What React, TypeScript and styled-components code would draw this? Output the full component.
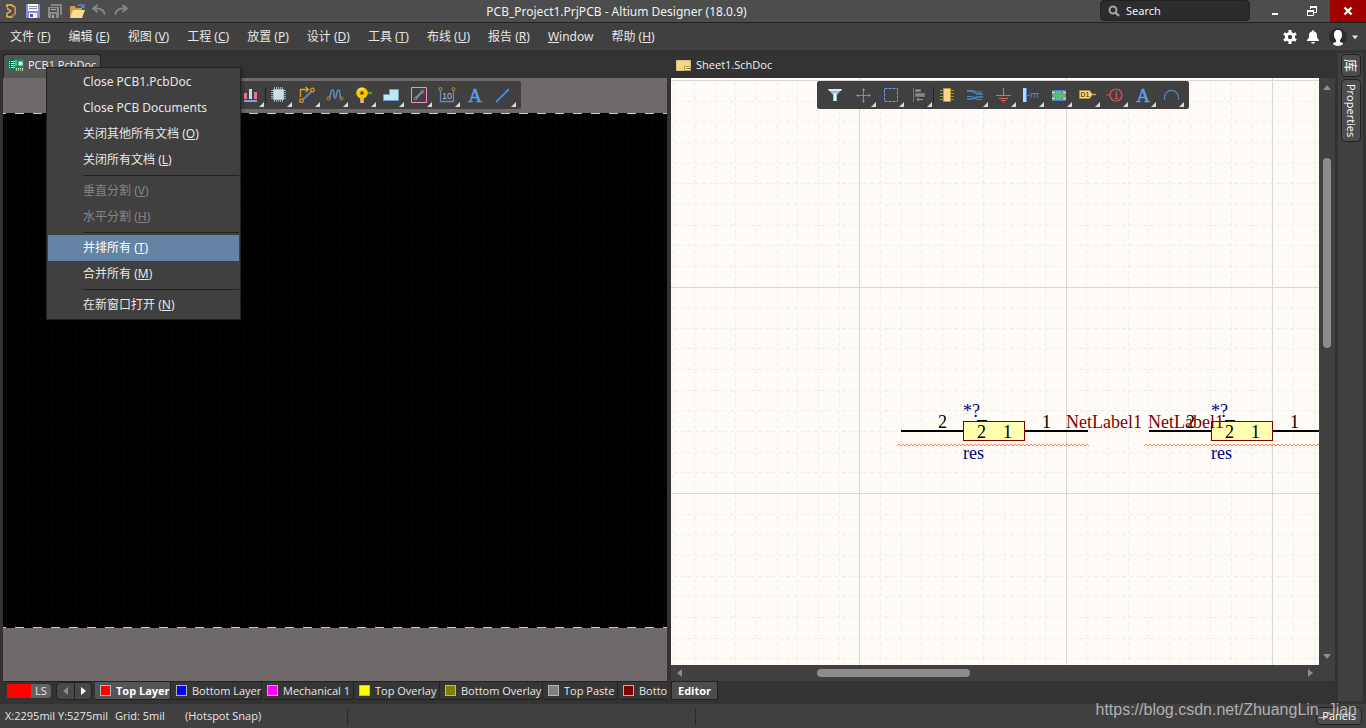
import React from "react";
import styled, { createGlobalStyle } from "styled-components";

const SMALL_FONT = `"Open Sans", "Noto Sans CJK SC", sans-serif`;

const Global = createGlobalStyle`
  * { box-sizing: border-box; }
  html, body { margin: 0; }
  body {
    background: #333333;
    font-family: "Noto Sans", "Noto Sans CJK SC", sans-serif;
    font-size: 12px;
    color: #e6e6e6;
  }
  button, input { font: inherit; color: inherit; margin: 0; }
  button { background: none; border: 0; padding: 0; white-space: nowrap; }
  svg { display: block; }
`;

const Shell = styled.div`
  display: flex;
  flex-direction: column;
  min-height: 100vh;
`;

/* ---------- title bar ---------- */

const TitleBar = styled.header`
  display: flex;
  align-items: flex-start;
  height: 23px;
  background: #4d4d4d;
  border-bottom: 1px solid #222222;
`;

const QuickTools = styled.div`
  display: flex;
  align-items: center;
  gap: 6px;
  padding: 3px 0 0 3px;
`;

const Title = styled.h1`
  flex: 1;
  margin: 0;
  padding-left: 4px;
  text-align: center;
  font-size: 12px;
  font-weight: 400;
  line-height: 24px;
  color: #f0f0f0;
`;

const SearchBox = styled.label`
  display: flex;
  align-items: center;
  gap: 6px;
  width: 150px;
  height: 21px;
  padding: 0 7px;
  margin-right: 8px;
  background: #2c2c2c;
  border: 1px solid #222222;
  border-radius: 4px;
`;

const SearchInput = styled.input`
  flex: 1;
  min-width: 0;
  padding: 0;
  background: none;
  border: 0;
  outline: 0;
  font-size: 11px;
  &::placeholder { color: #f0f0f0; opacity: 1; }
`;

const WindowButton = styled.button<{ $close?: boolean }>`
  display: flex;
  align-items: center;
  justify-content: center;
  width: 36px;
  height: 22px;
  background: ${(p) => (p.$close ? "#a00000" : "transparent")};
`;

/* ---------- main menu ---------- */

const MenuBar = styled.nav`
  display: flex;
  align-items: center;
  gap: 18px;
  height: 27px;
  padding: 0 8px 0 10px;
  background: #404040;
`;

const MenuButton = styled.button`
  line-height: 26px;
`;

const MenuActions = styled.div`
  display: flex;
  align-items: center;
  gap: 9px;
  margin-left: auto;
`;

const IconButton = styled.button`
  display: flex;
`;

const Account = styled.button`
  display: flex;
  align-items: center;
  gap: 5px;
`;

/* ---------- workspace ---------- */

const Workspace = styled.main`
  flex: 1;
  display: flex;
  padding: 0 3px;
  background: #333333;
`;

const Pane = styled.section`
  flex: 1 1 0;
  min-width: 0;
  display: flex;
  flex-direction: column;
  & + & { margin-left: 4px; }
`;

const TabRow = styled.div`
  display: flex;
  align-items: flex-end;
  height: 28px;
`;

const TabHolder = styled.div`
  position: relative;
`;

const DocTab = styled.button<{ $active?: boolean }>`
  display: flex;
  align-items: center;
  gap: 4px;
  height: 24px;
  padding: 0 4px 4px;
  font-family: ${SMALL_FONT};
  font-size: 11px;
  color: #f0f0f0;
  border: 1px solid ${(p) => (p.$active ? "#222222" : "transparent")};
  border-bottom: 0;
  border-radius: 4px 4px 0 0;
  background: ${(p) => (p.$active ? "#555555" : "transparent")};
`;

const ContextMenu = styled.div`
  position: absolute;
  z-index: 5;
  top: 13px;
  left: 43px;
  width: 195px;
  padding: 1px;
  background: #404040;
  border: 1px solid #222222;
  box-shadow: 2px 2px 3px rgba(0, 0, 0, 0.3);
`;

const ContextItem = styled.button<{ $selected?: boolean }>`
  display: block;
  width: 100%;
  height: 26px;
  padding-left: 35px;
  text-align: left;
  line-height: 26px;
  background: ${(p) => (p.$selected ? "#6384a5" : "transparent")};
  color: ${(p) => (p.$selected ? "#ffffff" : "#e6e6e6")};
  &:disabled { color: #858585; }
`;

const ContextRule = styled.hr`
  height: 1px;
  margin: 2px 0 2px 35px;
  border: 0;
  background: #222222;
`;

const ToolBar = styled.div`
  position: absolute;
  z-index: 2;
  top: 3px;
  left: 50%;
  transform: translateX(-50%);
  display: flex;
  padding: 0 4px;
  background: #404040;
  border-radius: 2px;
`;

const ToolButton = styled.button<{ $flyout?: boolean; $divided?: boolean }>`
  position: relative;
  display: flex;
  align-items: center;
  justify-content: center;
  width: 28px;
  height: 28px;
  &::after {
    content: "";
    position: absolute;
    right: 1px;
    bottom: 2px;
    border-style: solid;
    border-width: 0 0 5px 5px;
    border-color: transparent transparent #d8d8d8 transparent;
    display: ${(p) => (p.$flyout ? "block" : "none")};
  }
  &::before {
    content: "";
    position: absolute;
    left: 0;
    top: 6px;
    width: 1px;
    height: 16px;
    background: #222222;
    display: ${(p) => (p.$divided ? "block" : "none")};
  }
`;

/* ---------- board view ---------- */

const BoardView = styled.div`
  position: relative;
  flex: 1;
  display: flex;
  flex-direction: column;
  padding: 35px 0 53px;
  background: #6f6a69;
`;

const Board = styled.div`
  flex: 1;
  background-color: #000000;
  background-image:
    repeating-linear-gradient(90deg, #c8c8c8 0 3px, #000000 3px 12px, #c8c8c8 12px 18px),
    repeating-linear-gradient(90deg, #c8c8c8 0 3px, #000000 3px 12px, #c8c8c8 12px 18px),
    radial-gradient(circle at 1px 1px, #060606 1px, transparent 1px);
  background-size: 100% 1px, 100% 1px, 6px 6px;
  background-position: top, bottom, 0 0;
  background-repeat: no-repeat, no-repeat, repeat;
`;

const LayerBar = styled.div`
  display: flex;
  height: 23px;
  overflow: hidden;
  border-top: 1px solid #222222;
  font-family: ${SMALL_FONT};
  font-size: 11px;
`;

const LayerSet = styled.button`
  display: flex;
  align-self: flex-start;
  height: 14px;
  margin: 2px 5px 0 4px;
  line-height: 14px;
  border-radius: 0 4px 4px 0;
  background: #636363;
`;

const CurrentColor = styled.span`
  width: 24px;
  height: 14px;
  background: #ff0000;
`;

const LayerSetName = styled.span`
  width: 20px;
  text-align: center;
`;

const LayerNav = styled.div`
  display: flex;
  align-self: flex-start;
  height: 18px;
  margin-right: 3px;
  border: 1px solid #222222;
  border-radius: 4px;
  background: #484848;
`;

const NavButton = styled.button`
  display: flex;
  align-items: center;
  justify-content: center;
  width: 17px;
  & + & { border-left: 1px solid #222222; }
`;

const LayerTab = styled.button<{ $width: number; $active?: boolean }>`
  display: flex;
  flex: none;
  align-items: center;
  gap: 5px;
  width: ${(p) => p.$width}px;
  height: 18px;
  padding-left: 5px;
  border: 1px solid #222222;
  border-width: 0 1px 1px 0;
  border-radius: 0 0 3px 3px;
  background: ${(p) => (p.$active ? "#555555" : "#363636")};
  font-weight: ${(p) => (p.$active ? 700 : 400)};
  color: ${(p) => (p.$active ? "#ffffff" : "#e6e6e6")};
`;

const Swatch = styled.span<{ $color: string }>`
  flex: none;
  width: 11px;
  height: 11px;
  border: 1px solid #b4b4b4;
  background: ${(p) => p.$color};
`;

/* ---------- schematic view ---------- */

const SheetArea = styled.div`
  position: relative;
  flex: 1;
  display: flex;
  min-height: 0;
`;

const Sheet = styled.div`
  position: relative;
  flex: 1;
  min-width: 0;
  overflow: hidden;
  background: #fffcf7;
  & > svg { position: absolute; inset: 0; }
`;

const ScrollTrack = styled.div<{ $vertical?: boolean }>`
  display: flex;
  flex-direction: ${(p) => (p.$vertical ? "column" : "row")};
  align-items: center;
  justify-content: space-between;
  flex: none;
  width: ${(p) => (p.$vertical ? "16px" : "auto")};
  height: ${(p) => (p.$vertical ? "auto" : "16px")};
  margin-right: ${(p) => (p.$vertical ? "0" : "16px")};
  padding: ${(p) => (p.$vertical ? "5px 0" : "0 5px")};
  background: #404040;
  box-shadow: ${(p) => (p.$vertical ? "none" : "16px 0 0 #404040")};
`;

const ScrollLane = styled.div<{ $vertical?: boolean }>`
  display: flex;
  flex: 1;
  flex-direction: ${(p) => (p.$vertical ? "column" : "row")};
`;

const ScrollGap = styled.span<{ $grow: number }>`
  flex: ${(p) => p.$grow} 1 0;
`;

const Thumb = styled.span<{ $grow: number }>`
  flex: ${(p) => p.$grow} 1 0;
  min-width: 8px;
  min-height: 8px;
  border-radius: 4px;
  background: #8c8c8c;
`;

const EditorRow = styled.div`
  display: flex;
  align-items: flex-start;
  height: 23px;
`;

const EditorTab = styled.button`
  height: 19px;
  padding: 0 6px;
  border: 1px solid #222222;
  background: #4d4d4d;
  font-family: ${SMALL_FONT};
  font-size: 11px;
  font-weight: 700;
  color: #ffffff;
`;

/* ---------- side dock ---------- */

const Dock = styled.aside`
  display: flex;
  flex-direction: column;
  align-items: center;
  gap: 2px;
  width: 25px;
  margin: 3px 0 3px 3px;
  padding-top: 1px;
  background: #404040;
`;

const DockTab = styled.button`
  display: flex;
  align-items: center;
  width: 20px;
  padding: 4px 0;
  justify-content: center;
  writing-mode: vertical-rl;
  text-orientation: sideways;
  font-family: ${SMALL_FONT};
  line-height: 18px;
  border: 1px solid #222222;
  border-radius: 4px;
  background: #4d4d4d;
  color: #ffffff;
`;

const DockGlyph = styled.span`
  font-size: 13px;
`;

const DockWord = styled.span`
  font-size: 11px;
`;

/* ---------- status bar ---------- */

const StatusBar = styled.footer`
  position: relative;
  display: flex;
  height: 24px;
  background: #404040;
  font-family: ${SMALL_FONT};
  font-size: 11px;
  line-height: 24px;
`;

const StatusCell = styled.div`
  display: flex;
  width: 348px;
  padding-left: 5px;
  background: linear-gradient(#2b2b2b, #2b2b2b) right 4px / 1px 17px no-repeat;
`;

const Coordinates = styled.span`
  width: 110px;
`;

const GridSize = styled.span`
  width: 70px;
`;

const PanelsButton = styled.button`
  align-self: center;
  height: 18px;
  margin: 0 4px 0 auto;
  padding: 0 5px;
  line-height: 16px;
  border: 1px solid #222222;
  border-radius: 4px;
  background: #4d4d4d;
  color: #ffffff;
`;

const Watermark = styled.span`
  position: absolute;
  right: 9px;
  bottom: 8px;
  font-family: "Liberation Sans", Arial, sans-serif;
  font-size: 16px;
  line-height: 20px;
  color: rgba(215, 215, 215, 0.75);
`;

/* ---------- icons ---------- */

type IconProps = { children: React.ReactNode; size?: number };

const Icon = ({ children, size = 20 }: IconProps) => (
  <svg width={size} height={size} viewBox={`0 0 ${size} ${size}`} fill="none" aria-hidden="true">
    {children}
  </svg>
);

const LogoIcon = () => (
  <Icon size={16}>
    <path d="M3 1h6l4 3v7l-4 4H5l-2-1v-2l2 1h3l3-3V5L8 3H5v2L3 4z" fill="#c9a45c" />
    <path d="M4 5.500l3.500 2v1L4 10.500v3" stroke="#c9a45c" strokeWidth="1.800" />
    <path d="M11.500 4v7L9 13.500" stroke="#94733a" strokeWidth="1.200" />
  </Icon>
);
const SaveIcon = () => (
  <Icon size={16}>
    <path d="M1 1h14v14H1z" fill="#8b8bdb" />
    <path d="M3 1h10v7H3zM4 10h8v5H4z" fill="#f4f4fb" />
    <path d="M4 3.500h8M4 5.500h8" stroke="#8888a0" />
    <path d="M5 11h3v3H5z" fill="#5555a0" />
  </Icon>
);
const SaveAllIcon = () => (
  <Icon size={16}>
    <path d="M4 1h11v11h-2V3H4z" fill="#858585" />
    <path d="M1 4h11v11H1z" fill="#8c8c8c" />
    <path d="M3 5h7v4H3zM4 11h5v4H4z" fill="#555555" />
    <path d="M4 6.500h5" stroke="#aaaaaa" />
    <path d="M5 12h2v3H5z" fill="#aaaaaa" />
  </Icon>
);
const OpenIcon = () => (
  <Icon size={16}>
    <path d="M1 14V3h5l1 2h6v3" fill="#c99e4b" />
    <path d="M1 15l3-8h12l-3 8z" fill="#f7dc94" />
    <path d="M9 3q3-3 5 1M12 4h3V1" stroke="#5b91cc" strokeWidth="1.300" />
  </Icon>
);
const UndoIcon = ({ flip }: { flip?: boolean }) => (
  <Icon size={16}>
    <path
      d={flip ? "M9.500 2L14 5.500 9.500 9M13.500 5.500H9Q3.500 6 2 11.500" : "M6.500 2L2 5.500 6.500 9M2.500 5.500H7q5.500 .5 7 6"}
      stroke="#858585"
      strokeWidth="2"
    />
  </Icon>
);

const PcbDocIcon = () => (
  <Icon size={16}>
    <path d="M0 2h10v10H0z" fill="#087b56" />
    <path d="M1 4.500h1M1 6.500h1M1 8.500h1M1 10.500h1M3 4.500h5M3 6.500h4M3 8.500h4M3 10.500h4" stroke="#b8eccf" />
    <path d="M7 2h9v12H7z" fill="#0a8f62" />
    <path d="M10.500 4.500h4v4h-4z" fill="#dff5e6" />
    <path d="M8 3v6" stroke="#8be0b5" />
    <path d="M8 11.500h1M10 11.500h1M12 11.500h1M14 11.500h1M8 13h1M10 13h1M12 13h1M14 13h1" stroke="#f5f2ba" />
  </Icon>
);
const SchDocIcon = () => (
  <Icon size={16}>
    <path d="M0.500 3.500h14v10h-14z" fill="#f3d883" stroke="#dcc38a" />
    <path d="M8.500 9.500h6v4h-6z" fill="#fff0b5" stroke="#b59a56" />
    <path d="M10 11.500h4" stroke="#8c7130" />
  </Icon>
);

const FilterIcon = () => (
  <Icon>
    <path d="M3 4h14l-5 6v6H8v-6z" fill="#8fc3d6" />
    <path d="M3 4h14l-1 2H4z" fill="#d5eef5" />
    <path d="M10 8v8" stroke="#eaf9fc" strokeWidth="2" />
  </Icon>
);
const CrossIcon = () => (
  <Icon>
    <path d="M10.500 4v13M4 10.500h13" stroke="#6790dd" />
    <path d="M9.500 5.500l1-2 1 2M9.500 15.500l1 2 1-2M5.500 9.500l-2 1 2 1M15.500 9.500l2 1-2 1" stroke="#6790dd" />
  </Icon>
);
const SelectIcon = () => (
  <Icon>
    <path d="M3.500 3.500h13v13h-13z" stroke="#7396f0" strokeDasharray="3 1" />
  </Icon>
);
const AlignIcon = () => (
  <Icon>
    <path d="M4.500 3v14" stroke="#777777" />
    <path d="M6 4h6v3H6zM6 8h10v4H6z" fill="#777777" />
    <path d="M7 5.500h4M7 10h7M8 14.500h6M8 14.500l2-2M8 14.500l2 2" stroke="#999999" />
  </Icon>
);
const BarsIcon = () => (
  <Icon>
    <path d="M3 8h3v6H3zM13 7h3v7h-3z" fill="#ee7680" />
    <path d="M8 4h3v10H8z" fill="#aee3f5" />
    <path d="M3 16h13" stroke="#7b9df2" strokeWidth="2" />
  </Icon>
);
const ChipIcon = () => (
  <Icon>
    <path
      d="M5.500 2v15M7.500 2v15M9.500 2v15M11.500 2v15M13.500 2v15M2 5.500h15M2 7.500h15M2 9.500h15M2 11.500h15M2 13.500h15"
      stroke="#8fb2c4"
    />
    <path d="M4.500 4.500h10v10h-10z" fill="#d5dade" stroke="#aebfc9" />
  </Icon>
);
const RouteIcon = () => (
  <Icon>
    <path d="M3.500 12V4.500h7M8.500 2l3 2.500-3 2.500" stroke="#e0a51c" strokeWidth="1.300" />
    <path d="M6 14.500L15 6" stroke="#5c80b5" strokeWidth="2.400" />
    <circle cx="4.500" cy="15.500" r="1.800" stroke="#d08c1c" strokeWidth="1.400" />
    <circle cx="15.500" cy="5" r="1.800" stroke="#d08c1c" strokeWidth="1.400" />
  </Icon>
);
const TuneIcon = () => (
  <Icon>
    <path d="M4 13c2 0 1-8 3.500-8S8 13 10 13s1-8 3.500-8S14 13 16 13" stroke="#5c86c4" strokeWidth="1.600" />
    <circle cx="3.500" cy="13.500" r="1.500" stroke="#d08c1c" />
    <circle cx="16.500" cy="13.500" r="1.500" stroke="#d08c1c" />
  </Icon>
);
const ViaIcon = () => (
  <Icon>
    <path d="M9 11v7" stroke="#efb67a" strokeWidth="3.500" />
    <path d="M12 8h7" stroke="#4c9b35" strokeWidth="2.500" />
    <circle cx="9" cy="8" r="3.800" stroke="#f8c900" strokeWidth="4" />
    <circle cx="9" cy="8" r="1.600" fill="#404040" stroke="#a87800" />
    <path d="M5 5q3-3 6-1" stroke="#ffee88" />
  </Icon>
);
const PolygonIcon = () => (
  <Icon>
    <path d="M2.500 9.500h6v-5h9v11h-15z" fill="#c5e6ef" stroke="#67a3c7" />
  </Icon>
);
const RoomIcon = () => (
  <Icon>
    <path d="M2.500 2.500h15v15h-15z" stroke="#f08ed0" />
    <path d="M7 13l6-6" stroke="#6c91c5" strokeWidth="2.200" />
    <circle cx="6.500" cy="13.500" r="1.300" stroke="#d0901c" />
    <circle cx="13.500" cy="6.500" r="1.300" stroke="#d0901c" />
  </Icon>
);
const DimensionIcon = () => (
  <Icon>
    <path d="M3.500 6v10.500h13V6" stroke="#6688bb" strokeWidth="1.300" />
    <circle cx="3.500" cy="4" r="1.500" stroke="#d08c1c" />
    <circle cx="16.500" cy="4" r="1.500" stroke="#d08c1c" />
    <text x="10" y="14" textAnchor="middle" fontFamily="Liberation Sans" fontSize="9" fill="#b4c0ca">
      10
    </text>
  </Icon>
);
const LetterIcon = () => (
  <Icon>
    <text x="10" y="17" textAnchor="middle" fontFamily="Liberation Serif" fontSize="19" fill="#5c9de8" stroke="#5c9de8" strokeWidth="0.500">
      A
    </text>
  </Icon>
);
const LineIcon = () => (
  <Icon>
    <path d="M3 17L16 4" stroke="#4a8ad6" strokeWidth="1.800" />
  </Icon>
);
const PartIcon = () => (
  <Icon>
    <path d="M3 5.500h14M3 8.500h14M3 11.500h14M3 14.500h14" stroke="#ad8a36" />
    <path d="M6.500 3.500h7v13h-7z" fill="#fbd78d" stroke="#c4942f" />
  </Icon>
);
const WireIcon = () => (
  <Icon>
    <path d="M2 6h5l5 3h6M2 14h5l5-2h6" stroke="#4486c9" strokeWidth="1.400" />
    <path d="M2 5.500h6l4 1.500h5M2 11.500h5l5 3h5" stroke="#4486c9" />
  </Icon>
);
const GroundIcon = () => (
  <Icon>
    <path d="M10.500 3v7M3 10.500h15M6 13.500h9M8 15.500h5M10 17.500h1" stroke="#f0605e" strokeWidth="1.200" />
  </Icon>
);
const HarnessIcon = () => (
  <Icon>
    <path d="M2 3h3v14H2z" fill="#b7d9ff" />
    <path d="M5.500 3v14" stroke="#4d8ce6" />
    <path d="M5 10.500h4M10 13l1-5M13 13l1-5M16 13l1-5M9 8.500h9" stroke="#5177d6" />
  </Icon>
);
const SheetSymbolIcon = () => (
  <Icon>
    <path d="M3.500 5.500h13v10h-13z" fill="#62ba78" stroke="#4c82e0" />
    <path d="M3 6h4v3H3zM13 6h4v3h-4zM3 12h4v3H3zM13 12h4v3h-4z" fill="#4c82e0" />
    <path d="M3 7.500h3M14 7.500h3M3 13.500h3M14 13.500h3" stroke="#f8e884" strokeWidth="1.500" />
  </Icon>
);
const PortIcon = () => (
  <Icon>
    <path d="M2.500 5.500h10l3 4-3 4h-10z" fill="#f6dc8a" stroke="#b78e35" />
    <path d="M15 9.500h4" stroke="#c89d3f" strokeWidth="1.500" />
    <text x="8" y="12" textAnchor="middle" fontFamily="Liberation Sans" fontSize="7" fontWeight="700" fill="#6d5218">
      D1
    </text>
  </Icon>
);
const DirectiveIcon = () => (
  <Icon>
    <circle cx="11" cy="10" r="6" stroke="#e05256" strokeWidth="1.200" />
    <path d="M1 10h4M10 9h1.500v4.500M10 13.500h3M11.500 6v1.500" stroke="#e05256" strokeWidth="1.200" />
  </Icon>
);
const ArcIcon = () => (
  <Icon>
    <path d="M4 15a7 7 0 1 1 13 0" stroke="#4f82c6" strokeWidth="1.200" />
  </Icon>
);

const SearchIcon = () => (
  <Icon size={12}>
    <circle cx="5" cy="5" r="3.500" stroke="#a6a6a6" strokeWidth="2" />
    <path d="M7.500 7.500L11 11" stroke="#a6a6a6" strokeWidth="2.400" />
  </Icon>
);
const MinimizeIcon = () => (
  <Icon size={10}>
    <path d="M1 8h6" stroke="#ffffff" strokeWidth="2" />
  </Icon>
);
const RestoreIcon = () => (
  <Icon size={10}>
    <path d="M3.500 3V1.500h6v5H7" stroke="#ffffff" />
    <path d="M3 1h7" stroke="#ffffff" strokeWidth="2" />
    <path d="M0.500 4.500h6v5h-6z" stroke="#ffffff" />
    <path d="M0 5h7" stroke="#ffffff" strokeWidth="2" />
  </Icon>
);
const CloseIcon = () => (
  <Icon size={10}>
    <path d="M1.500 1.500l7 7M8.500 1.500l-7 7" stroke="#ffffff" strokeWidth="2.400" />
  </Icon>
);
const GearIcon = () => (
  <Icon size={14}>
    <circle cx="7" cy="7" r="3.500" stroke="#ffffff" strokeWidth="3" />
    <path d="M7 0v3M7 11v3M1 3.500l2.500 1.500M10.500 9l2.500 1.500M1 10.500L3.500 9M10.500 5L13 3.500" stroke="#ffffff" strokeWidth="3" />
    <circle cx="7" cy="7" r="2" fill="#404040" />
  </Icon>
);
const BellIcon = () => (
  <Icon size={14}>
    <path d="M7 0q1 0 1 1.500c3 .5 3 3 3 5q0 2 2 3.500v1H1v-1q2-1.500 2-3.500c0-2 0-4.500 3-5Q6 0 7 0z" fill="#ffffff" />
    <path d="M5 12h4l-1 1.500H6z" fill="#ffffff" />
  </Icon>
);
const UserIcon = () => (
  <Icon size={18}>
    <circle cx="9" cy="9" r="9" fill="#2b2b2b" />
    <path d="M9 2c3 0 4 2 4 5 0 2-1 4-2 5v2l3 1v1q-2 2-5 2t-5-2v-1l3-1v-2c-1-1-2-3-2-5 0-3 1-5 4-5z" fill="#ffffff" />
  </Icon>
);

type Dir = "up" | "down" | "left" | "right";
const TRIANGLES: Record<Dir, string> = {
  up: "M0 7l4-5 4 5z",
  down: "M0 2h8L4 7z",
  left: "M6 0v8L1 4z",
  right: "M2 0v8l5-4z",
};
const Arrow = ({ dir, color = "#8c8c8c", size = 8 }: { dir: Dir; color?: string; size?: number }) => (
  <svg width={size} height={size} viewBox="0 0 8 8" aria-hidden="true">
    <path d={TRIANGLES[dir]} fill={color} />
  </svg>
);

/* ---------- data ---------- */

type Label = { text: string; hotkey?: string };

const MENUS: Label[] = [
  { text: "文件", hotkey: "F" },
  { text: "编辑", hotkey: "E" },
  { text: "视图", hotkey: "V" },
  { text: "工程", hotkey: "C" },
  { text: "放置", hotkey: "P" },
  { text: "设计", hotkey: "D" },
  { text: "工具", hotkey: "T" },
  { text: "布线", hotkey: "U" },
  { text: "报告", hotkey: "R" },
  { text: "Window" },
  { text: "帮助", hotkey: "H" },
];

type Entry = Label & { disabled?: boolean; selected?: boolean };

const CONTEXT_GROUPS: Entry[][] = [
  [
    { text: "Close PCB1.PcbDoc" },
    { text: "Close PCB Documents" },
    { text: "关闭其他所有文档", hotkey: "O" },
    { text: "关闭所有文档", hotkey: "L" },
  ],
  [
    { text: "垂直分割", hotkey: "V", disabled: true },
    { text: "水平分割", hotkey: "H", disabled: true },
  ],
  [
    { text: "并排所有", hotkey: "T", selected: true },
    { text: "合并所有", hotkey: "M" },
  ],
  [{ text: "在新窗口打开", hotkey: "N" }],
];

type Tool = { name: string; icon: React.ReactNode; flyout?: boolean; divided?: boolean };

const PCB_TOOLS: Tool[] = [
  { name: "Filter", icon: <FilterIcon /> },
  { name: "Move", icon: <CrossIcon />, flyout: true },
  { name: "Select", icon: <SelectIcon />, flyout: true },
  { name: "Align", icon: <BarsIcon />, flyout: true },
  { name: "Component", icon: <ChipIcon />, flyout: true, divided: true },
  { name: "Route", icon: <RouteIcon />, flyout: true },
  { name: "Tune", icon: <TuneIcon />, flyout: true },
  { name: "Via", icon: <ViaIcon />, flyout: true },
  { name: "Polygon", icon: <PolygonIcon />, flyout: true },
  { name: "Room", icon: <RoomIcon />, flyout: true },
  { name: "Dimension", icon: <DimensionIcon />, flyout: true },
  { name: "String", icon: <LetterIcon /> },
  { name: "Line", icon: <LineIcon />, flyout: true },
];

const SCH_TOOLS: Tool[] = [
  { name: "Filter", icon: <FilterIcon /> },
  { name: "Move", icon: <CrossIcon />, flyout: true },
  { name: "Select", icon: <SelectIcon />, flyout: true },
  { name: "Align", icon: <AlignIcon />, flyout: true },
  { name: "Part", icon: <PartIcon />, divided: true },
  { name: "Wire", icon: <WireIcon />, flyout: true },
  { name: "Power", icon: <GroundIcon />, flyout: true },
  { name: "Harness", icon: <HarnessIcon />, flyout: true },
  { name: "Sheet symbol", icon: <SheetSymbolIcon />, flyout: true },
  { name: "Port", icon: <PortIcon />, flyout: true },
  { name: "Directive", icon: <DirectiveIcon />, flyout: true },
  { name: "Text", icon: <LetterIcon />, flyout: true },
  { name: "Arc", icon: <ArcIcon />, flyout: true },
];

const LAYERS = [
  { name: "Top Layer", color: "#ff0000", width: 76, active: true },
  { name: "Bottom Layer", color: "#0000ff", width: 91 },
  { name: "Mechanical 1", color: "#ff00ff", width: 92 },
  { name: "Top Overlay", color: "#ffff00", width: 86 },
  { name: "Bottom Overlay", color: "#808000", width: 103 },
  { name: "Top Paste", color: "#808080", width: 75 },
  { name: "Bottom Paste", color: "#800000", width: 91 },
];

/* ---------- composed parts ---------- */

const Caption = ({ text, hotkey }: Label) =>
  hotkey ? (
    <>
      {text} (<u>{hotkey}</u>)
    </>
  ) : (
    <>{text}</>
  );

const Tools = ({ label, items }: { label: string; items: Tool[] }) => (
  <ToolBar role="toolbar" aria-label={label}>
    {items.map((t) => (
      <ToolButton key={t.name} aria-label={t.name} $flyout={t.flyout} $divided={t.divided}>
        {t.icon}
      </ToolButton>
    ))}
  </ToolBar>
);

const GRID_STEP = 20.65;
const gridX = Array.from({ length: 110 }, (_, i) => ({ at: Math.round(188.3 + (i - 9) * GRID_STEP), major: (i - 9) % 10 === 0 }));
const gridY = Array.from({ length: 80 }, (_, i) => ({ at: Math.round(2 + i * GRID_STEP), major: i % 10 === 0 }));

const zigzag = (x: number, width: number, y: number) => {
  let d = `M${x} ${y}`;
  for (let i = 0; i < width; i += 4) d += "l2 -2l2 2";
  return d;
};

const Resistor = ({ x }: { x: number }) => (
  <g transform={`translate(${x} 0)`} fontFamily="Liberation Serif, serif" fontSize="18">
    <path d="M0 353h62M124 353h63" stroke="#000000" strokeWidth="2" />
    <rect x="62.5" y="343.5" width="61" height="19" fill="#ffffb0" stroke="#800000" />
    <path d="M76 342.500h10" stroke="#000000" />
    <g fill="#000000">
      <text x="37" y="350">2</text>
      <text x="141" y="350">1</text>
      <text x="76" y="360">2</text>
      <text x="102" y="360">1</text>
    </g>
    <g fill="#000080">
      <text x="62" y="339">*?</text>
      <text x="62" y="381">res</text>
    </g>
  </g>
);

const Schematic = () => (
  <svg width="100%" height="100%" role="img" aria-label="Schematic sheet">
    <g shapeRendering="crispEdges">
      {gridX.filter((l) => !l.major).map((l) => (
        <path key={l.at} d={`M${l.at + 0.5} 4V1700`} stroke="#efeeea" strokeDasharray="4 3" />
      ))}
      {gridY.filter((l) => !l.major).map((l) => (
        <path key={l.at} d={`M3 ${l.at + 0.5}H2300`} stroke="#efeeea" strokeDasharray="4 3" />
      ))}
      {gridX.filter((l) => l.major).map((l) => (
        <path key={l.at} d={`M${l.at + 0.5} 0V1700`} stroke="#d9d8d4" />
      ))}
      {gridY.filter((l) => l.major).map((l) => (
        <path key={l.at} d={`M0 ${l.at + 0.5}H2300`} stroke="#d9d8d4" />
      ))}
    </g>
    <Resistor x={230} />
    <Resistor x={478} />
    <g fontFamily="Liberation Serif, serif" fontSize="18" fill="#800000">
      <text x="395" y="350">NetLabel1</text>
      <text x="477" y="350">NetLabel1</text>
    </g>
    <path d={zigzag(226, 190, 368)} stroke="#ff8a50" fill="none" />
    <path d={zigzag(473, 190, 368)} stroke="#ff8a50" fill="none" />
  </svg>
);

export default function App() {
  return (
    <Shell>
      <Global />
      <TitleBar>
        <QuickTools>
          <LogoIcon />
          <IconButton aria-label="Save"><SaveIcon /></IconButton>
          <IconButton aria-label="Save all"><SaveAllIcon /></IconButton>
          <IconButton aria-label="Open"><OpenIcon /></IconButton>
          <IconButton aria-label="Undo"><UndoIcon /></IconButton>
          <IconButton aria-label="Redo"><UndoIcon flip /></IconButton>
        </QuickTools>
        <Title>PCB_Project1.PrjPCB - Altium Designer (18.0.9)</Title>
        <SearchBox>
          <SearchIcon />
          <SearchInput type="text" placeholder="Search" aria-label="Search" />
        </SearchBox>
        <WindowButton aria-label="Minimize"><MinimizeIcon /></WindowButton>
        <WindowButton aria-label="Restore"><RestoreIcon /></WindowButton>
        <WindowButton aria-label="Close" $close><CloseIcon /></WindowButton>
      </TitleBar>

      <MenuBar>
        {MENUS.map((m) => (
          <MenuButton key={m.text}>
            {m.hotkey ? <Caption {...m} /> : <><u>W</u>indow</>}
          </MenuButton>
        ))}
        <MenuActions>
          <IconButton aria-label="Settings"><GearIcon /></IconButton>
          <IconButton aria-label="Notifications"><BellIcon /></IconButton>
          <Account aria-label="Account">
            <UserIcon />
            <Arrow dir="down" color="#e6e6e6" size={6} />
          </Account>
        </MenuActions>
      </MenuBar>

      <Workspace>
        <Pane>
          <TabRow>
            <TabHolder>
              <DocTab $active>
                <PcbDocIcon />
                PCB1.PcbDoc
              </DocTab>
              <ContextMenu role="menu">
                {CONTEXT_GROUPS.map((group, i) => (
                  <React.Fragment key={i}>
                    {i > 0 && <ContextRule />}
                    {group.map((e) => (
                      <ContextItem key={e.text} role="menuitem" disabled={e.disabled} $selected={e.selected}>
                        <Caption text={e.text} hotkey={e.hotkey} />
                      </ContextItem>
                    ))}
                  </React.Fragment>
                ))}
              </ContextMenu>
            </TabHolder>
          </TabRow>
          <BoardView>
            <Tools label="PCB tools" items={PCB_TOOLS} />
            <Board />
          </BoardView>
          <LayerBar>
            <LayerSet>
              <CurrentColor />
              <LayerSetName>LS</LayerSetName>
            </LayerSet>
            <LayerNav>
              <NavButton aria-label="Previous layer"><Arrow dir="left" /></NavButton>
              <NavButton aria-label="Next layer"><Arrow dir="right" color="#ffffff" /></NavButton>
            </LayerNav>
            {LAYERS.map((l) => (
              <LayerTab key={l.name} $width={l.width} $active={l.active}>
                <Swatch $color={l.color} />
                {l.name}
              </LayerTab>
            ))}
          </LayerBar>
        </Pane>

        <Pane>
          <TabRow>
            <DocTab>
              <SchDocIcon />
              Sheet1.SchDoc
            </DocTab>
          </TabRow>
          <SheetArea>
            <Tools label="Schematic tools" items={SCH_TOOLS} />
            <Sheet>
              <Schematic />
            </Sheet>
            <ScrollTrack $vertical>
              <Arrow dir="up" />
              <ScrollLane $vertical>
                <ScrollGap $grow={67} />
                <Thumb $grow={190} />
                <ScrollGap $grow={304} />
              </ScrollLane>
              <Arrow dir="down" />
            </ScrollTrack>
          </SheetArea>
          <ScrollTrack>
            <Arrow dir="left" />
            <ScrollLane>
              <ScrollGap $grow={133} />
              <Thumb $grow={153} />
              <ScrollGap $grow={336} />
            </ScrollLane>
            <Arrow dir="right" />
          </ScrollTrack>
          <EditorRow>
            <EditorTab>Editor</EditorTab>
          </EditorRow>
        </Pane>

        <Dock>
          <DockTab><DockGlyph>库</DockGlyph></DockTab>
          <DockTab><DockWord>Properties</DockWord></DockTab>
        </Dock>
      </Workspace>

      <StatusBar>
        <StatusCell>
          <Coordinates>X:2295mil Y:5275mil</Coordinates>
          <GridSize>Grid: 5mil</GridSize>
          <span>(Hotspot Snap)</span>
        </StatusCell>
        <StatusCell />
        <PanelsButton>Panels</PanelsButton>
        <Watermark>https://blog.csdn.net/ZhuangLin_Jian</Watermark>
      </StatusBar>
    </Shell>
  );
}
